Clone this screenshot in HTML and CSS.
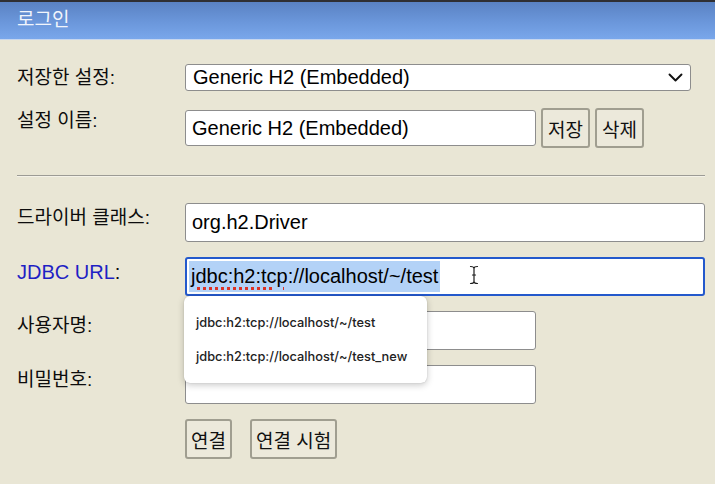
FILE: index.html
```html
<!DOCTYPE html>
<html lang="ko">
<head>
<meta charset="utf-8">
<title>로그인</title>
<link rel="stylesheet" href="styles.css">
</head>
<body>
<div class="header">로그인</div>
<form class="login">
  <div class="row row-center">
    <label class="label">저장한 설정:</label>
    <div class="select">
      <span>Generic H2 (Embedded)</span>
      <svg class="chevron" width="15" height="9" viewBox="0 0 15 9"><polyline points="1.5,1.5 7.5,7.5 13.5,1.5" fill="none" stroke="#111" stroke-width="1.9" stroke-linecap="round" stroke-linejoin="round"/></svg>
    </div>
  </div>
  <div class="row row-name">
    <label class="label label-name">설정 이름:</label>
    <div class="field field-name">Generic H2 (Embedded)</div>
    <button type="button" class="btn">저장</button>
    <button type="button" class="btn">삭제</button>
  </div>
  <hr class="sep">
  <div class="conn">
    <div class="row">
      <label class="label">드라이버 클래스:</label>
      <div class="field field-wide">org.h2.Driver</div>
    </div>
    <div class="row">
      <label class="label label-latin"><span class="blue">JDBC URL</span>:</label>
      <div class="field field-wide field-focus">
        <span class="sel"><span class="spell">jdbc:h2:tcp</span>://localhost/~/test</span>
        <svg class="ibeam" width="12" height="20" viewBox="0 0 12 20"><path d="M2.5 1.5 Q6 1.5 6 3.5 Q6 1.5 9.5 1.5 M6 3.5 V16.5 M2.5 18.5 Q6 18.5 6 16.5 Q6 18.5 9.5 18.5 M4.5 10 H7.5" fill="none" stroke="#fff" stroke-width="2.6" stroke-linecap="round"/><path d="M2.5 1.5 Q6 1.5 6 3.5 Q6 1.5 9.5 1.5 M6 3.5 V16.5 M2.5 18.5 Q6 18.5 6 16.5 Q6 18.5 9.5 18.5 M4.5 10 H7.5" fill="none" stroke="#1c1c1c" stroke-width="1.2" stroke-linecap="round"/></svg>
        <ul class="suggest">
          <li class="suggest-item">jdbc:h2:tcp://localhost/~/test</li>
          <li class="suggest-item">jdbc:h2:tcp://localhost/~/test_new</li>
        </ul>
      </div>
    </div>
    <div class="row">
      <label class="label">사용자명:</label>
      <div class="field field-short"></div>
    </div>
    <div class="row">
      <label class="label">비밀번호:</label>
      <div class="field field-short"></div>
    </div>
    <div class="row row-actions">
      <button type="button" class="btn">연결</button>
      <button type="button" class="btn">연결 시험</button>
    </div>
  </div>
</form>
</body>
</html>
```

FILE: styles.css
```css
* {
  box-sizing: border-box;
}

html, body {
  margin: 0;
  padding: 0;
}

body {
  width: 715px;
  height: 484px;
  overflow: hidden;
  background: #e9e6d5;
  font-family: "Liberation Sans", "Noto Sans CJK KR", sans-serif;
  color: #111;
}

.header {
  height: 40px;
  border-top: 2px solid #2f2f33;
  border-bottom: 1px solid #c6d6ee;
  background: linear-gradient(to bottom, #5a82c3 0%, #6b97db 55%, #79a7eb 100%);
  padding-left: 17px;
  font-family: "Noto Sans CJK KR", sans-serif;
  font-size: 19px;
  line-height: 31px;
  color: #f1f5fc;
}

.login {
  padding: 24px 10px 0 17px;
  display: flex;
  flex-direction: column;
}

.row {
  display: flex;
  align-items: flex-start;
}

.row-center {
  align-items: center;
}

.row-name {
  margin-top: 17px;
  align-items: center;
}

.label {
  width: 168px;
  flex: none;
  font-family: "Liberation Sans", "Noto Sans CJK KR", sans-serif;
  font-size: 19px;
  line-height: 26px;
  padding-top: 2px;
  color: #0d0d0d;
}

.row-center .label {
  padding-top: 0;
}

.row-name .label {
  align-self: flex-start;
  padding-top: 0;
}

.label-latin {
  font-size: 20px;
  padding-top: 2px;
}

.blue {
  color: #1f1fc4;
}

.select {
  width: 506px;
  height: 27px;
  background: #fff;
  border: 1px solid #8d8d8d;
  border-radius: 3px;
  display: flex;
  align-items: center;
  justify-content: space-between;
  padding: 0 7px;
  font-size: 20px;
  color: #000;
}

.chevron {
  display: block;
}

.field {
  height: 39px;
  background: #fff;
  border: 1px solid #8d8d8d;
  border-radius: 3px;
  padding: 0 6px;
  display: flex;
  align-items: center;
  font-size: 20px;
  color: #000;
  white-space: nowrap;
}

.field-name {
  width: 351px;
  height: 36px;
  margin-right: 5px;
}

.field-wide {
  flex: 1;
}

.field-short {
  width: 351px;
}

.field-focus {
  position: relative;
  border: 2px solid #2459cc;
  padding-left: 2px;
}

.sel {
  display: inline-block;
  line-height: 31px;
  padding: 0 2px;
  background: #b3d2f7;
}

.spell {
  text-decoration: underline dotted #dd3326;
  text-decoration-thickness: 2.5px;
  text-underline-offset: 4px;
}

.ibeam {
  position: absolute;
  left: 281px;
  top: 6px;
}

.suggest {
  position: absolute;
  left: -3px;
  top: calc(100% + 2px);
  width: 243px;
  margin: 0;
  padding: 10px 0 9px;
  list-style: none;
  background: #fff;
  border-radius: 6px;
  box-shadow: 0 2px 7px rgba(0, 0, 0, 0.22), 0 0 1px rgba(0, 0, 0, 0.25);
  z-index: 2;
}

.suggest-item {
  height: 34px;
  line-height: 34px;
  padding-left: 12px;
  font-family: Inter, "Liberation Sans", sans-serif;
  font-size: 12.8px;
  font-weight: 500;
  color: #222;
}

.btn {
  height: 40px;
  padding: 0 5px;
  border: 2px solid #a09e90;
  border-radius: 3px;
  background: #ece9db;
  font-family: "Noto Sans CJK KR", sans-serif;
  font-size: 19px;
  line-height: 1;
  color: #111;
  margin-right: 5px;
}

.sep {
  margin: 27px 0 0 0;
  height: 2px;
  border: none;
  border-top: 1px solid #9c9b95;
  border-bottom: 1px solid #f4f2e8;
}

.conn {
  margin-top: 26px;
  display: flex;
  flex-direction: column;
  gap: 15px;
}

.row-actions {
  padding-left: 168px;
  gap: 13px;
}

.row-actions .btn {
  padding: 0 4px;
}
```
